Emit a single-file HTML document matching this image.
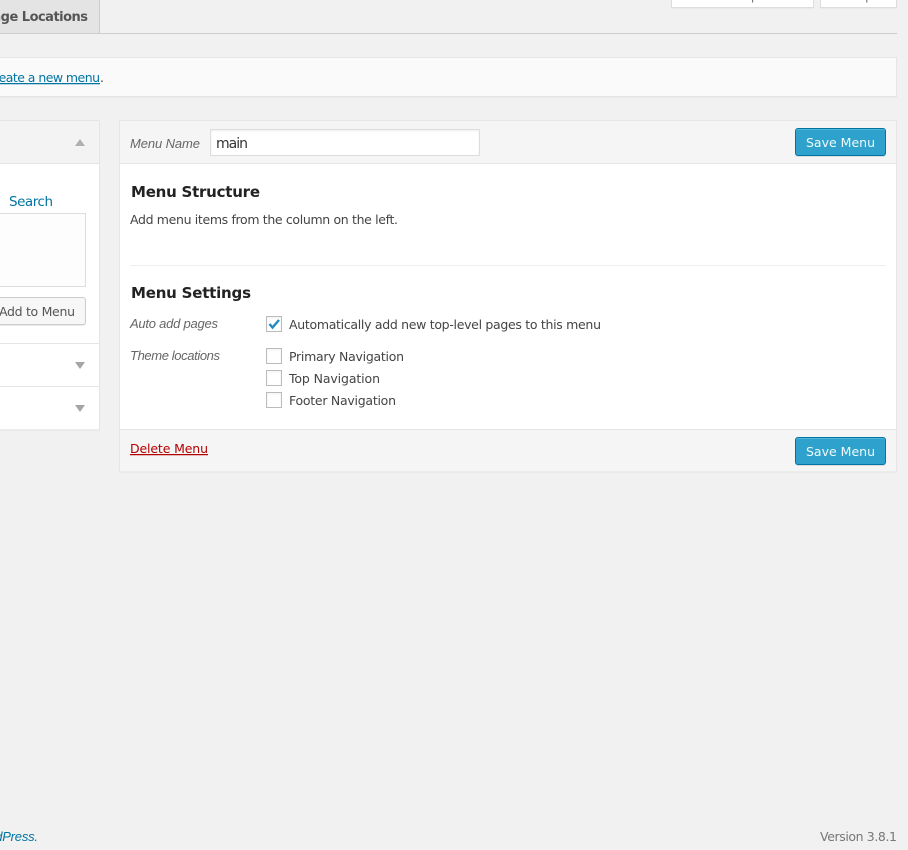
<!DOCTYPE html>
<html><head><meta charset="utf-8"><title>Menus</title>
<style>
html,body{margin:0;padding:0;width:908px;height:850px;overflow:hidden;background:#f1f1f1;}
.a{position:absolute;box-sizing:border-box;}
svg{position:absolute;left:0;top:0;}
text{font-family:"DejaVu Sans",sans-serif;font-size:12.5px;fill:#444;}
.i{font-family:"Liberation Sans",sans-serif;font-size:13px;font-style:italic;fill:#666;}
.h{font-size:15px;font-weight:bold;fill:#222;}
.l{fill:#0074a2;}
.w{fill:#f0fafd;}
.cb{width:16px;height:16px;background:#fff;border:1px solid #bbb;box-shadow:inset 0 1px 2px rgba(0,0,0,.06);left:266px;}
.btn{background:#2ea2cc;border:1px solid #0074a2;border-radius:3px;left:795px;width:91px;height:28px;box-shadow:inset 0 1px 0 rgba(120,200,230,.5),0 1px 0 rgba(0,0,0,.1);}
</style></head><body>
<div class="a" style="left:0;top:33px;width:897px;height:1px;background:#ccc"></div>
<div class="a" style="left:0;top:0;width:100px;height:33px;background:#e4e4e4;border-right:1px solid #ccc"></div>
<div class="a" style="left:671px;top:-5px;width:143px;height:13px;background:#fff;border:1px solid #ddd;box-shadow:0 1px 1px rgba(0,0,0,.04)"></div>
<div class="a" style="left:820px;top:-5px;width:77px;height:13px;background:#fff;border:1px solid #ddd;box-shadow:0 1px 1px rgba(0,0,0,.04)"></div>
<div class="a" style="left:-2px;top:57px;width:899px;height:40px;background:#fafafa;border:1px solid #e5e5e5;box-shadow:0 1px 1px rgba(0,0,0,.04)"></div>

<div class="a" style="left:-2px;top:120px;width:102px;height:310px;background:#fff;border:1px solid #e5e5e5;border-bottom-color:#ececec;box-shadow:0 1px 1px rgba(0,0,0,.04)"></div>
<div class="a" style="left:-1px;top:121px;width:100px;height:43px;background:#f3f3f3;border-bottom:1px solid #e5e5e5"></div>
<div class="a" style="left:-2px;top:213px;width:88px;height:74px;background:#fdfdfd;border:1px solid #ddd"></div>
<div class="a" style="left:-10px;top:297px;width:96px;height:28px;background:#f7f7f7;border:1px solid #ccc;border-radius:3px;box-shadow:0 1px 0 rgba(0,0,0,.08)"></div>
<div class="a" style="left:0;top:343px;width:99px;height:1px;background:#e5e5e5"></div>
<div class="a" style="left:0;top:386px;width:99px;height:1px;background:#e5e5e5"></div>

<div class="a" style="left:119px;top:120px;width:778px;height:352px;background:#f5f5f5;border:1px solid #e5e5e5;border-bottom-color:#ececec;box-shadow:0 1px 1px rgba(0,0,0,.04)"></div>
<div class="a" style="left:120px;top:121px;width:776px;height:43px;background:#f5f5f5;border-bottom:1px solid #e5e5e5"></div>
<div class="a" style="left:120px;top:164px;width:776px;height:265px;background:#fff"></div>
<div class="a" style="left:210px;top:129px;width:270px;height:27px;background:#fff;border:1px solid #ddd;box-shadow:inset 0 1px 2px rgba(0,0,0,.07)"></div>
<div class="a btn" style="top:128px"></div>
<div class="a" style="left:130px;top:265px;width:756px;height:1px;background:#eee"></div>
<div class="a cb" style="top:316px"></div>
<div class="a cb" style="top:348px"></div>
<div class="a cb" style="top:370px"></div>
<div class="a cb" style="top:392px"></div>
<div class="a" style="left:120px;top:429px;width:776px;height:1px;background:#e5e5e5"></div>
<div class="a btn" style="top:437px"></div>

<svg width="908" height="850" viewBox="0 0 908 850">
<text x="-37" y="21" textLength="125" lengthAdjust="spacing" style="font-size:13px;font-weight:bold;fill:#555">Manage Locations</text>
<text x="696" y="0" textLength="92" lengthAdjust="spacing" style="fill:#777">Screen Options</text>
<text x="843" y="0" textLength="30" lengthAdjust="spacing" style="fill:#777">Help</text>
<text x="-12" y="82" textLength="112" lengthAdjust="spacing" class="l" text-decoration="underline">create a new menu</text>
<text x="100" y="82">.</text>

<path d="M75 146L80 139L85 146Z" fill="#b0b0b0"/>
<path d="M75 362L80 369L85 362Z" fill="#a5a5a5"/>
<path d="M75 405L80 412L85 405Z" fill="#a5a5a5"/>
<text x="9" y="206" textLength="44" lengthAdjust="spacing" class="l" style="font-size:13.5px">Search</text>
<text x="-1" y="316" textLength="76" lengthAdjust="spacing" style="fill:#555">Add to Menu</text>

<text x="130" y="148" textLength="70" lengthAdjust="spacing" class="i">Menu Name</text>
<text x="216" y="148" textLength="32" lengthAdjust="spacing" style="font-size:14px;fill:#333">main</text>
<text x="806" y="147" textLength="69" lengthAdjust="spacing" class="w">Save Menu</text>
<text x="131" y="197" textLength="129" lengthAdjust="spacing" class="h">Menu Structure</text>
<text x="130" y="224" textLength="268" lengthAdjust="spacing">Add menu items from the column on the left.</text>
<text x="131" y="298" textLength="120" lengthAdjust="spacing" class="h">Menu Settings</text>
<text x="130" y="328" textLength="88" lengthAdjust="spacing" class="i">Auto add pages</text>
<text x="130" y="360" textLength="90" lengthAdjust="spacing" class="i">Theme locations</text>
<path d="M269.500 324L272.500 327.500L279 320" fill="none" stroke="#1e8cbe" stroke-width="2.400"/>
<text x="289" y="329" textLength="312" lengthAdjust="spacing">Automatically add new top-level pages to this menu</text>
<text x="289" y="361" textLength="115" lengthAdjust="spacing">Primary Navigation</text>
<text x="289" y="383" textLength="91" lengthAdjust="spacing">Top Navigation</text>
<text x="289" y="405" textLength="107" lengthAdjust="spacing">Footer Navigation</text>
<text x="130" y="453" textLength="78" lengthAdjust="spacing" style="fill:#b30000" text-decoration="underline">Delete Menu</text>
<text x="806" y="456" textLength="69" lengthAdjust="spacing" class="w">Save Menu</text>
<text x="-28" y="841" textLength="66" lengthAdjust="spacing" class="i l" style="fill:#0074a2">WordPress.</text>
<text x="820" y="841" textLength="77" lengthAdjust="spacing" style="fill:#777">Version 3.8.1</text>
</svg>
</body></html>
